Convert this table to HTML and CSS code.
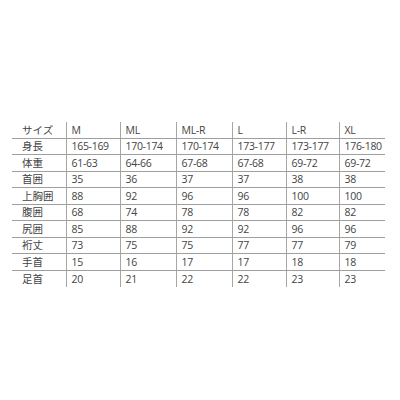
FILE: index.html
```html
<!DOCTYPE html>
<html lang="ja">
<head>
<meta charset="utf-8">
<link rel="stylesheet" href="styles.css">
</head>
<body>
<div class="wrap">
<table class="size-table">
  <colgroup>
    <col class="c-label"><col class="c-m"><col class="c-ml"><col class="c-mlr"><col class="c-l"><col class="c-lr"><col class="c-xl">
  </colgroup>
  <tr><th>サイズ</th><td>M</td><td>ML</td><td>ML-R</td><td>L</td><td>L-R</td><td>XL</td></tr>
  <tr><th>身長</th><td>165-169</td><td>170-174</td><td>170-174</td><td>173-177</td><td>173-177</td><td>176-180</td></tr>
  <tr><th>体重</th><td>61-63</td><td>64-66</td><td>67-68</td><td>67-68</td><td>69-72</td><td>69-72</td></tr>
  <tr><th>首囲</th><td>35</td><td>36</td><td>37</td><td>37</td><td>38</td><td>38</td></tr>
  <tr><th>上胸囲</th><td>88</td><td>92</td><td>96</td><td>96</td><td>100</td><td>100</td></tr>
  <tr><th>腹囲</th><td>68</td><td>74</td><td>78</td><td>78</td><td>82</td><td>82</td></tr>
  <tr><th>尻囲</th><td>85</td><td>88</td><td>92</td><td>92</td><td>96</td><td>96</td></tr>
  <tr><th>裄丈</th><td>73</td><td>75</td><td>75</td><td>77</td><td>77</td><td>79</td></tr>
  <tr><th>手首</th><td>15</td><td>16</td><td>17</td><td>17</td><td>18</td><td>18</td></tr>
  <tr><th>足首</th><td>20</td><td>21</td><td>22</td><td>22</td><td>23</td><td>23</td></tr>
</table>
</div>
</body>
</html>
```
FILE: styles.css
```css
html, body {
  margin: 0;
  padding: 0;
  background: #ffffff;
}
.wrap {
  padding: 122px 0 0 12px;
}
.size-table {
  border-collapse: collapse;
  table-layout: fixed;
  width: 373px;
  font-family: "Open Sans", "Noto Sans CJK JP", sans-serif;
  font-size: 10.5px;
  letter-spacing: -0.3px;
  color: #444444;
}
.c-label { width: 54px; }
.c-m { width: 54px; }
.c-ml { width: 56px; }
.c-mlr { width: 56px; }
.c-l { width: 54px; }
.c-lr { width: 53px; }
.c-xl { width: 46px; }
.size-table tr {
  height: 16.5px;
}
.size-table tr:first-child {
  height: 16px;
}
.size-table th,
.size-table td {
  padding: 0 0 0 5px;
  text-align: left;
  vertical-align: middle;
  font-weight: normal;
  line-height: 14px;
  border-bottom: 1px solid #9f9f9f;
  white-space: nowrap;
}
.size-table th {
  padding-left: 10px;
  letter-spacing: 0;
}
.size-table td {
  border-left: 1px solid #a6a6a6;
}
.size-table tr:last-child th,
.size-table tr:last-child td {
  border-bottom: none;
}
```
